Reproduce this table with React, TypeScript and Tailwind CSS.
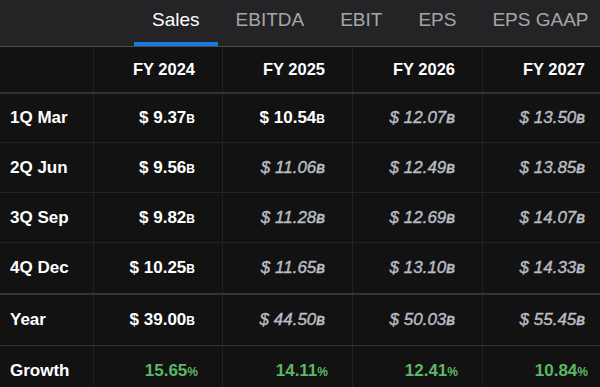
import { ReactNode } from 'react';

type Cell = { v: string; est?: boolean; pct?: boolean };

const tabs = ['Sales', 'EBITDA', 'EBIT', 'EPS', 'EPS GAAP'];
const years = ['FY 2024', 'FY 2025', 'FY 2026', 'FY 2027'];

const rows: { label: string; cells: Cell[]; h: string; border: string }[] = [
  {
    label: '1Q Mar',
    h: 'h-[49px]',
    border: 'border-b border-[#242425]',
    cells: [{ v: '9.37' }, { v: '10.54' }, { v: '12.07', est: true }, { v: '13.50', est: true }],
  },
  {
    label: '2Q Jun',
    h: 'h-[50px]',
    border: 'border-b border-[#242425]',
    cells: [{ v: '9.56' }, { v: '11.06', est: true }, { v: '12.49', est: true }, { v: '13.85', est: true }],
  },
  {
    label: '3Q Sep',
    h: 'h-[50px]',
    border: 'border-b border-[#242425]',
    cells: [{ v: '9.82' }, { v: '11.28', est: true }, { v: '12.69', est: true }, { v: '14.07', est: true }],
  },
  {
    label: '4Q Dec',
    h: 'h-[52px]',
    border: 'border-b-2 border-[#343436]',
    cells: [{ v: '10.25' }, { v: '11.65', est: true }, { v: '13.10', est: true }, { v: '14.33', est: true }],
  },
  {
    label: 'Year',
    h: 'h-[51px]',
    border: 'border-b border-[#343436]',
    cells: [{ v: '39.00' }, { v: '44.50', est: true }, { v: '50.03', est: true }, { v: '55.45', est: true }],
  },
  {
    label: 'Growth',
    h: 'h-[50px]',
    border: '',
    cells: [{ v: '15.65', pct: true }, { v: '14.11', pct: true }, { v: '12.41', pct: true }, { v: '10.84', pct: true }],
  },
];

const colW = ['w-[93px]', 'w-[129px]', 'w-[130px]', 'w-[130px]', 'w-[130px]'];

function Value({ c }: { c: Cell }) {
  if (c.pct) {
    return (
      <span className="font-bold text-[17px] text-[#5db766]">
        {c.v}
        <span className="text-[12px]">%</span>
      </span>
    );
  }
  if (c.est) {
    return (
      <span className="italic text-[17px] text-[#b8bcc3] [-webkit-text-stroke:0.4px_#b8bcc3]">
        $&nbsp;{c.v}
        <span className="text-[12px] font-bold">B</span>
      </span>
    );
  }
  return (
    <span className="font-bold text-[17px] text-white">
      $&nbsp;{c.v}
      <span className="text-[12px]">B</span>
    </span>
  );
}

function Cellbox({ i, pct, children }: { i: number; pct?: boolean; children: ReactNode }) {
  return (
    <div
      className={`${colW[i]} shrink-0 h-full flex items-center ${
        i === 0
          ? 'pl-[10px]'
          : `justify-end border-l border-[#222223] ${pct ? 'pr-[24px]' : 'pr-[27px]'}`
      }`}
    >
      {children}
    </div>
  );
}

export default function App() {
  return (
    <div
      className="w-[600px] h-[387px] overflow-hidden bg-[#121213] text-white"
      style={{ fontFamily: '"Liberation Sans", Arial, sans-serif' }}
    >
      {/* Tabs */}
      <div className="h-[47px] bg-[#242426] border-b border-[#4b4b4d] flex pl-[134px]">
        {tabs.map((t, i) => (
          <div
            key={t}
            className={`shrink-0 px-[18px] h-[46px] pt-[6px] whitespace-nowrap text-[19px] border-b-4 ${
              i === 0 ? 'text-white border-[#1d7ae4]' : 'text-[#a6a6a9] border-transparent'
            }`}
          >
            {t}
          </div>
        ))}
      </div>

      {/* Header */}
      <div className="h-[47px] flex border-b-2 border-[#313133]">
        <Cellbox i={0}>{null}</Cellbox>
        {years.map((y, i) => (
          <Cellbox key={y} i={i + 1}>
            <span className="font-bold text-[16.5px] text-white">{y}</span>
          </Cellbox>
        ))}
      </div>

      {rows.map((r) => (
        <div key={r.label} className={`${r.h} ${r.border} flex`}>
          <Cellbox i={0}>
            <span className="font-bold text-[17px] text-white">{r.label}</span>
          </Cellbox>
          {r.cells.map((c, i) => (
            <Cellbox key={i} i={i + 1} pct={c.pct}>
              <Value c={c} />
            </Cellbox>
          ))}
        </div>
      ))}
    </div>
  );
}
